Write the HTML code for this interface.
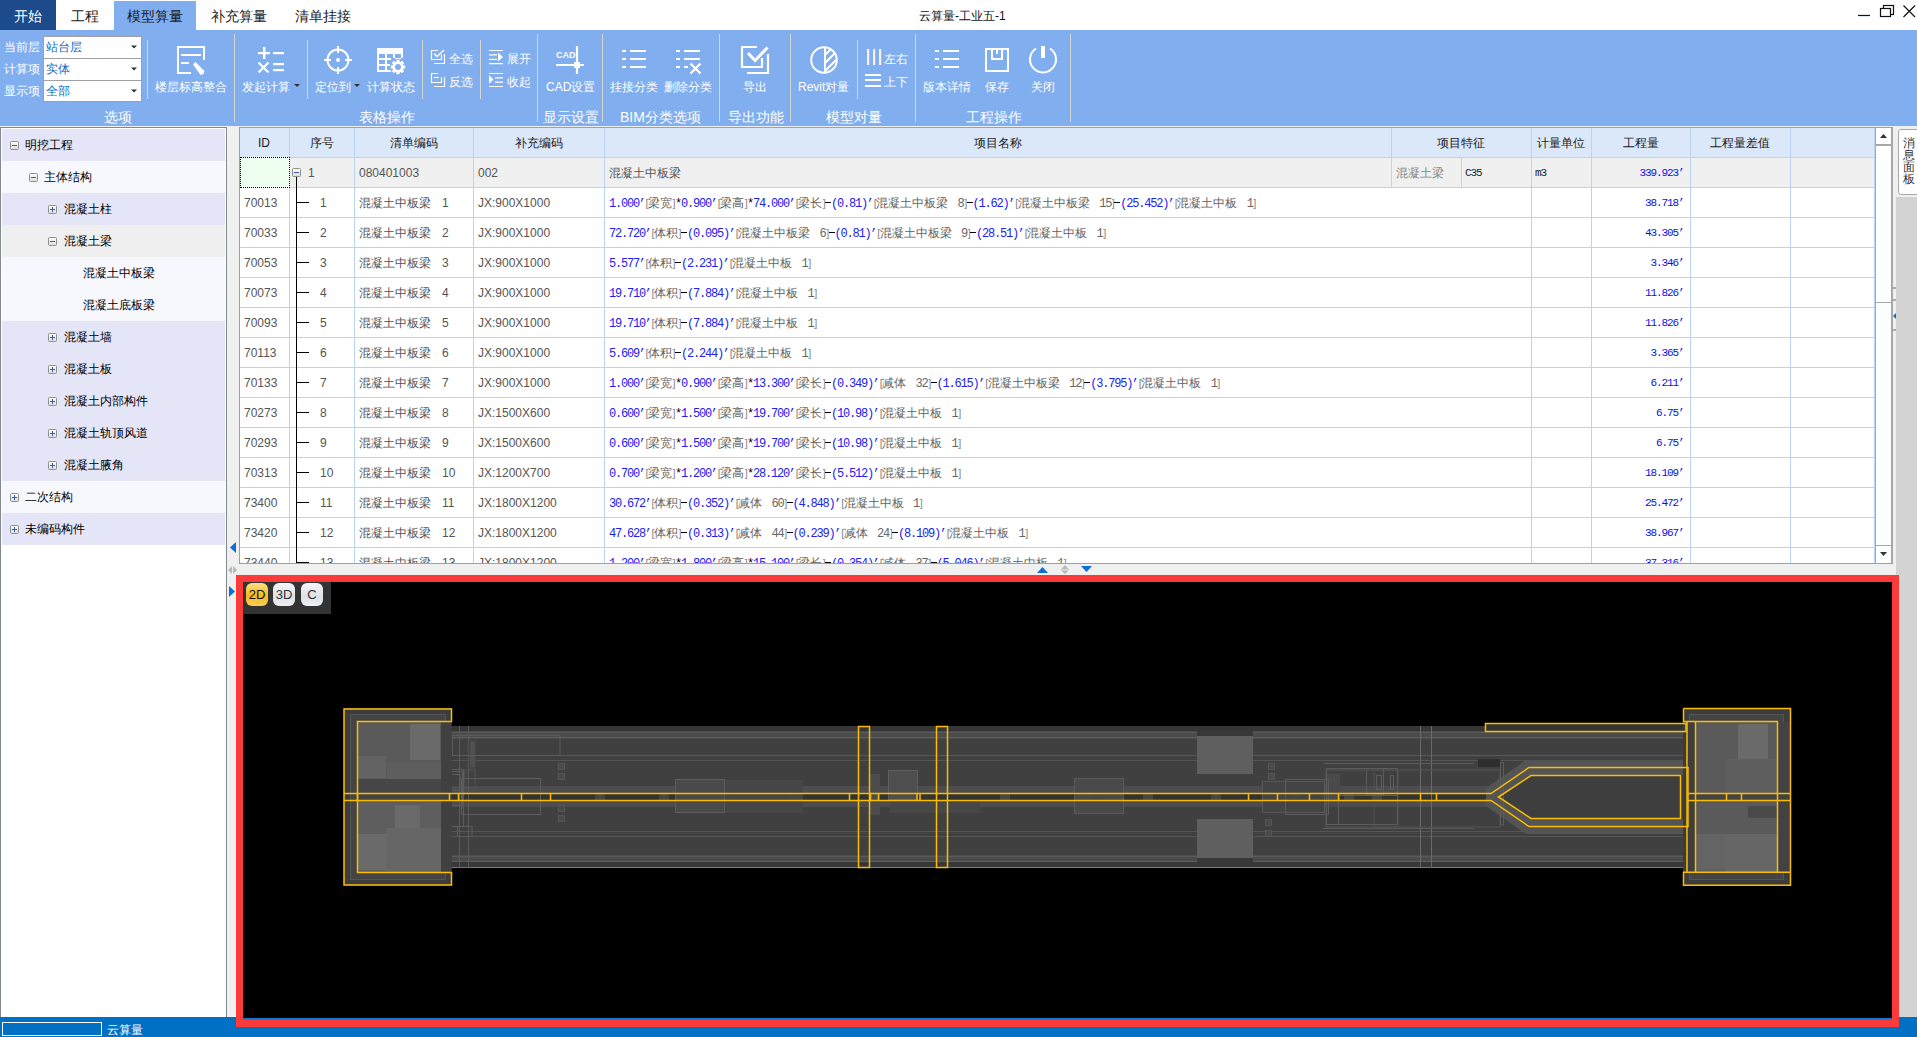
<!DOCTYPE html>
<html><head><meta charset="utf-8">
<style>
*{box-sizing:border-box;margin:0;padding:0}
html,body{width:1917px;height:1037px;overflow:hidden;background:#f0f0f0;font-family:"Liberation Sans",sans-serif;}
.a{position:absolute}
#title{left:0;top:0;width:1917px;height:30px;background:#fff}
.tab{position:absolute;top:1px;height:30px;font-size:14px;line-height:30px;color:#1a1a1a;white-space:nowrap}
#ribbon{left:0;top:30px;width:1917px;height:96px;background:#81aeee}
.rt{position:absolute;color:#fff;font-size:12px;line-height:12px;white-space:nowrap}
.gl{position:absolute;color:#fff;font-size:14px;line-height:14px;white-space:nowrap;top:81px}
.sep{position:absolute;width:1px;background:#d4dce8}
#left{left:0;top:127px;width:227px;height:890px;background:#fff;border:1px solid #828790;border-bottom:none}
.tt{position:absolute;font-size:12px;line-height:12px;color:#000;white-space:nowrap}
.tr{position:absolute;height:32px}
.trx{position:absolute;left:1px;width:224px;height:32px;font-size:13px;line-height:32px;color:#111;white-space:nowrap}
.pm{position:absolute;width:9px;height:9px;border:1px solid #8f8f8f;border-radius:1.5px;background:linear-gradient(#fbfbfb,#dedede)}
#grid{left:239px;top:127px;width:1653px;height:437px;background:#fff;border:1px solid #a0a0a0;overflow:hidden}
#canvasbox{left:236px;top:575px;width:1663px;height:452px;border:7px solid #fc3a3a;background:#000}
#status{left:0;top:1017px;width:1917px;height:20px;background:#0070c4}
.gh{position:absolute;text-align:center;font-size:12px;line-height:12px;color:#1a1a1a;font-weight:500;white-space:nowrap}
.gd{position:absolute;font-size:12px;line-height:12px;color:#555;white-space:nowrap}
.gm{position:absolute;font-family:"Liberation Mono",monospace;font-size:11px;line-height:11px;color:#222;letter-spacing:-1.1px;white-space:nowrap}
.gv{position:absolute;font-family:"Liberation Mono",monospace;font-size:11px;line-height:12px;color:#0c0cf0;letter-spacing:-1.1px;white-space:nowrap}
.gf{position:absolute;white-space:pre;font-size:12px;line-height:12px;font-family:"Liberation Sans",sans-serif}
.fn{font-family:"Liberation Mono",monospace;color:#2020f4;letter-spacing:-1.2px}
.fo{font-family:"Liberation Mono",monospace;color:#000;letter-spacing:-1.2px}
.fb{font-family:"Liberation Mono",monospace;color:#666;letter-spacing:-1.2px}
.fc{color:#646464}
.fs{display:inline-block}
.fd{display:inline-block;width:6px;height:1px;background:#000;vertical-align:4.5px}
.fk{display:inline-block;width:3px;color:#888;font-size:11px;text-indent:0.6px}
.fq{display:inline-block;width:6px;font-family:"Liberation Mono",monospace;color:#2020f4;font-size:12px;text-indent:-0.6px;overflow:visible}
.fq2{display:inline-block;width:5px;letter-spacing:0}
.btn{position:absolute;top:583px;width:22px;height:23px;border-radius:6px;background:linear-gradient(#f4f6f9,#dde1e6 60%,#eceff3);color:#333;font-size:13px;line-height:23px;text-align:center;font-family:"Liberation Sans",sans-serif}
</style></head><body>
<div id="title" class="a"></div>
<div class="a" style="left:0;top:0;width:56px;height:30px;background:#1c4a8b"></div>
<div class="tab" style="left:14px;color:#fff">开始</div>
<div class="tab" style="left:71px">工程</div>
<div class="a" style="left:114px;top:1px;width:82px;height:29px;background:#81aeee"></div>
<div class="tab" style="left:127px">模型算量</div>
<div class="tab" style="left:211px">补充算量</div>
<div class="tab" style="left:295px">清单挂接</div>
<div class="a" style="left:919px;top:1px;height:30px;line-height:30px;font-size:12px;color:#111;white-space:nowrap">云算量-工业五-1</div>
<svg class="a" style="left:1850px;top:0" width="67" height="30"><path d="M8,15.5h12" stroke="#111" stroke-width="1.2"/><rect x="33.5" y="5.5" width="10" height="9" fill="none" stroke="#111" stroke-width="1.2"/><rect x="30.5" y="8.5" width="10" height="8" fill="#fff" stroke="#111" stroke-width="1.2"/><path d="M53.5,5.5l11.5,11.5M65,5.5l-11.5,11.5" stroke="#111" stroke-width="1.2"/></svg>


<div id="ribbon" class="a"></div>
<!-- ribbon labels -->
<div class="rt" style="left:4px;top:41px">当前层</div>
<div class="rt" style="left:4px;top:63px">计算项</div>
<div class="rt" style="left:4px;top:85px">显示项</div>
<div class="a" style="left:43px;top:36px;width:99px;height:23px;background:#fff;border:1px solid #a0a0a0"></div>
<div class="a" style="left:43px;top:58px;width:99px;height:23px;background:#fff;border:1px solid #a0a0a0"></div>
<div class="a" style="left:43px;top:80px;width:99px;height:22px;background:#fff;border:1px solid #a0a0a0"></div>
<div class="rt" style="left:46px;top:41px;color:#0b6bc8">站台层</div>
<div class="rt" style="left:46px;top:63px;color:#0b6bc8">实体</div>
<div class="rt" style="left:46px;top:85px;color:#0b6bc8">全部</div>
<div class="rt" style="left:155px;top:81px">楼层标高整合</div>
<div class="rt" style="left:242px;top:81px">发起计算</div>
<div class="rt" style="left:315px;top:81px">定位到</div>
<div class="rt" style="left:367px;top:81px">计算状态</div>
<div class="rt" style="left:449px;top:53px">全选</div>
<div class="rt" style="left:449px;top:76px">反选</div>
<div class="rt" style="left:507px;top:53px">展开</div>
<div class="rt" style="left:507px;top:76px">收起</div>
<div class="rt" style="left:546px;top:81px">CAD设置</div>
<div class="rt" style="left:610px;top:81px">挂接分类</div>
<div class="rt" style="left:664px;top:81px">删除分类</div>
<div class="rt" style="left:743px;top:81px">导出</div>
<div class="rt" style="left:798px;top:81px">Revit对量</div>
<div class="rt" style="left:884px;top:53px">左右</div>
<div class="rt" style="left:884px;top:76px">上下</div>
<div class="rt" style="left:923px;top:81px">版本详情</div>
<div class="rt" style="left:985px;top:81px">保存</div>
<div class="rt" style="left:1031px;top:81px">关闭</div>
<div class="gl" style="left:104px;top:110px">选项</div>
<div class="gl" style="left:359px;top:110px">表格操作</div>
<div class="gl" style="left:543px;top:110px">显示设置</div>
<div class="gl" style="left:620px;top:110px">BIM分类选项</div>
<div class="gl" style="left:728px;top:110px">导出功能</div>
<div class="gl" style="left:826px;top:110px">模型对量</div>
<div class="gl" style="left:966px;top:110px">工程操作</div>
<svg class="a" style="left:0;top:0" width="1100" height="126" viewBox="0 0 1100 126">
 <g fill="#d6d6d0">
  <rect x="147" y="40" width="1" height="59"/>
  <rect x="234" y="34" width="1" height="88"/>
  <rect x="307" y="40" width="1" height="59"/>
  <rect x="422" y="40" width="1" height="59"/>
  <rect x="480" y="40" width="1" height="59"/>
  <rect x="537" y="34" width="1" height="88"/>
  <rect x="602" y="34" width="1" height="88"/>
  <rect x="719" y="34" width="1" height="88"/>
  <rect x="790" y="34" width="1" height="88"/>
  <rect x="857" y="40" width="1" height="59"/>
  <rect x="915" y="34" width="1" height="88"/>
  <rect x="1070" y="34" width="1" height="88"/>
 </g>
 <!-- combo arrows -->
 <g fill="#333">
  <path d="M131,45.5h6l-3,3z"/><path d="M131,67.5h6l-3,3z"/><path d="M131,89.5h6l-3,3z"/>
  <path d="M294,84h6l-3,3z"/><path d="M354,84h6l-3,3z"/>
 </g>
 <g fill="#fff">
  <!-- 楼层标高整合 -->
  <path d="M177,46h28v14h-2v-12h-24v24h12v2h-14z"/>
  <rect x="181" y="54" width="20" height="2"/><rect x="181" y="62" width="8" height="2"/>
  <path d="M193,64.5l2.5,-2.5l9,9l-1,3l-3,1z"/>
  <!-- 发起计算 -->
  <rect x="258" y="52" width="12" height="2.2"/><rect x="263" y="47" width="2.4" height="12"/>
  <rect x="273" y="52" width="11" height="2.2"/>
  <rect x="273" y="63" width="11" height="2.2"/><rect x="273" y="69" width="11" height="2.2"/>
  <!-- 计算状态 -->
  <rect x="377" y="48" width="26" height="24"/>
  <g fill="#81aeee"><rect x="379" y="54" width="6" height="4"/><rect x="379" y="60" width="6" height="4"/><rect x="379" y="66" width="6" height="4"/>
  <rect x="387" y="54" width="6" height="4"/><rect x="387" y="60" width="6" height="4"/><rect x="387" y="66" width="6" height="4"/><rect x="395" y="54" width="6" height="4"/>
  <rect x="391" y="58" width="4" height="2"/><rect x="391" y="64" width="2" height="2"/><rect x="401" y="58" width="2" height="2"/>
  <circle cx="398" cy="67" r="8.3"/></g>
  <circle cx="398" cy="67" r="5.6"/>
  <g transform="translate(398 67)"><rect x="-1.6" y="-7.2" width="3.2" height="14.4"/><rect x="-1.6" y="-7.2" width="3.2" height="14.4" transform="rotate(45)"/><rect x="-1.6" y="-7.2" width="3.2" height="14.4" transform="rotate(90)"/><rect x="-1.6" y="-7.2" width="3.2" height="14.4" transform="rotate(135)"/></g>
  <circle cx="398" cy="67" r="3" fill="#81aeee"/>
 </g>
 <g stroke="#fff" fill="none">
  <path d="M258.5,62.5l10,10M268.5,62.5l-10,10" stroke-width="2.2"/>
  <circle cx="338" cy="60" r="10.5" stroke-width="2"/><circle cx="338" cy="60" r="1.2" stroke-width="1.6"/>
  <path d="M324,60h7M345,60h7M338,46v7M338,67v7" stroke-width="2"/>
  <!-- 全选 -->
  <path d="M438,50.5h-6.5v9h10v-5" stroke-width="1.2"/>
  <path d="M434,63.5h10.5v-9.5" stroke-width="1.2"/>
  <path d="M434,53.5l3,3l7,-6.5" stroke-width="1.5"/>
  <!-- 反选 -->
  <path d="M438,73.5h-6.5v9h10v-5" stroke-width="1.2"/>
  <path d="M434,86.5h10.5v-9.5" stroke-width="1.2"/>
  <path d="M434,77.5h5" stroke-width="1.2"/>
  <!-- 展开 -->
  <path d="M489,50.5h14M489,54.8h8M489,59.3h8M489,63.7h14" stroke-width="1.2"/>
  <!-- 收起 -->
  <path d="M489,73.5h14M495,77.8h8M495,82.2h8M489,86.5h14" stroke-width="1.2"/>
  <!-- CAD -->
  <path d="M577,46v28M556,65h28" stroke-width="2.2"/>
  <!-- 挂接分类 / 版本详情 / 删除 -->
  <path d="M622,51h4M630,51h16M622,59h4M630,59h16M622,67h4M630,67h16" stroke-width="2.2"/>
  <path d="M676,51h4M684,51h16M676,59h4M684,59h16M676,67h4M684,67h4" stroke-width="2.2"/>
  <path d="M690.5,63.5l10,10M700.5,63.5l-10,10" stroke-width="2.2"/>
  <path d="M935,51h4M943,51h16M935,59h4M943,59h16M935,67h4M943,67h16" stroke-width="2.2"/>
  <!-- 导出 -->
  <path d="M757,47h-15v20h20v-9" stroke-width="2.2"/>
  <path d="M747,73h21v-19" stroke-width="2.2"/>
  <path d="M748,53l7,7.5l12.5,-13" stroke-width="3"/>
  <!-- Revit -->
  <circle cx="824" cy="60" r="12.8" stroke-width="2"/>
  <path d="M825,47v26M825,55l6,-6M825,63l10.5,-10.5M825,71l11.5,-11.5" stroke-width="2"/>
  <!-- 上下 -->
  <path d="M865,75h16M865,80h16M865,86h16" stroke-width="2.2"/>
  <!-- 保存 -->
  <rect x="986" y="49" width="22" height="22" stroke-width="2"/>
  <path d="M992,49v10h10v-10M997,49v5" stroke-width="2"/>
  <!-- power -->
  <path d="M1036,48.5a13,13 0 1 0 14,0" stroke-width="2"/>
 </g>
 <g fill="#fdf0e8"><rect x="867" y="49" width="2.2" height="16"/><rect x="873" y="49" width="2.2" height="16"/><rect x="879" y="49" width="2.2" height="16"/></g>
 <g fill="#fff">
  <path d="M498,52.5l5,4.5l-5,4.6z"/>
  <path d="M489,75.2l4.5,4.4l-4.5,4.4z"/>
  <rect x="574" y="62" width="6" height="6"/>
  <rect x="1041" y="46" width="4" height="12"/>
 </g>
 <text x="556" y="58" font-family="Liberation Sans" font-weight="bold" font-size="9" fill="#fff">CAD</text>
</svg>


<div id="left" class="a"></div>
<div class="tr" style="top:129px;left:2px;width:223px;background:#e5e5f8"></div>
<div class="pm" style="left:10px;top:141px"></div>
<div class="a" style="left:12px;top:145px;width:5px;height:1px;background:#3a5fb0"></div>
<div class="tt" style="left:25px;top:139px">明挖工程</div>
<div class="tr" style="top:161px;left:2px;width:223px;background:#f7f8fe"></div>
<div class="pm" style="left:29px;top:173px"></div>
<div class="a" style="left:31px;top:177px;width:5px;height:1px;background:#3a5fb0"></div>
<div class="tt" style="left:44px;top:171px">主体结构</div>
<div class="tr" style="top:193px;left:2px;width:223px;background:#e5e5f8"></div>
<div class="pm" style="left:48px;top:205px"></div>
<div class="a" style="left:50px;top:209px;width:5px;height:1px;background:#3a5fb0"></div>
<div class="a" style="left:52px;top:207px;width:1px;height:5px;background:#3a5fb0"></div>
<div class="tt" style="left:64px;top:203px">混凝土柱</div>
<div class="tr" style="top:225px;left:2px;width:223px;background:#efefef"></div>
<div class="pm" style="left:48px;top:237px"></div>
<div class="a" style="left:50px;top:241px;width:5px;height:1px;background:#3a5fb0"></div>
<div class="tt" style="left:64px;top:235px">混凝土梁</div>
<div class="tr" style="top:257px;left:2px;width:223px;background:#f7f8fe"></div>
<div class="tt" style="left:83px;top:267px">混凝土中板梁</div>
<div class="tr" style="top:289px;left:2px;width:223px;background:#f7f8fe"></div>
<div class="tt" style="left:83px;top:299px">混凝土底板梁</div>
<div class="tr" style="top:321px;left:2px;width:223px;background:#e5e5f8"></div>
<div class="pm" style="left:48px;top:333px"></div>
<div class="a" style="left:50px;top:337px;width:5px;height:1px;background:#3a5fb0"></div>
<div class="a" style="left:52px;top:335px;width:1px;height:5px;background:#3a5fb0"></div>
<div class="tt" style="left:64px;top:331px">混凝土墙</div>
<div class="tr" style="top:353px;left:2px;width:223px;background:#e5e5f8"></div>
<div class="pm" style="left:48px;top:365px"></div>
<div class="a" style="left:50px;top:369px;width:5px;height:1px;background:#3a5fb0"></div>
<div class="a" style="left:52px;top:367px;width:1px;height:5px;background:#3a5fb0"></div>
<div class="tt" style="left:64px;top:363px">混凝土板</div>
<div class="tr" style="top:385px;left:2px;width:223px;background:#e5e5f8"></div>
<div class="pm" style="left:48px;top:397px"></div>
<div class="a" style="left:50px;top:401px;width:5px;height:1px;background:#3a5fb0"></div>
<div class="a" style="left:52px;top:399px;width:1px;height:5px;background:#3a5fb0"></div>
<div class="tt" style="left:64px;top:395px">混凝土内部构件</div>
<div class="tr" style="top:417px;left:2px;width:223px;background:#e5e5f8"></div>
<div class="pm" style="left:48px;top:429px"></div>
<div class="a" style="left:50px;top:433px;width:5px;height:1px;background:#3a5fb0"></div>
<div class="a" style="left:52px;top:431px;width:1px;height:5px;background:#3a5fb0"></div>
<div class="tt" style="left:64px;top:427px">混凝土轨顶风道</div>
<div class="tr" style="top:449px;left:2px;width:223px;background:#e5e5f8"></div>
<div class="pm" style="left:48px;top:461px"></div>
<div class="a" style="left:50px;top:465px;width:5px;height:1px;background:#3a5fb0"></div>
<div class="a" style="left:52px;top:463px;width:1px;height:5px;background:#3a5fb0"></div>
<div class="tt" style="left:64px;top:459px">混凝土腋角</div>
<div class="tr" style="top:481px;left:2px;width:223px;background:#f7f8fe"></div>
<div class="pm" style="left:10px;top:493px"></div>
<div class="a" style="left:12px;top:497px;width:5px;height:1px;background:#3a5fb0"></div>
<div class="a" style="left:14px;top:495px;width:1px;height:5px;background:#3a5fb0"></div>
<div class="tt" style="left:25px;top:491px">二次结构</div>
<div class="tr" style="top:513px;left:2px;width:223px;background:#e5e5f8"></div>
<div class="pm" style="left:10px;top:525px"></div>
<div class="a" style="left:12px;top:529px;width:5px;height:1px;background:#3a5fb0"></div>
<div class="a" style="left:14px;top:527px;width:1px;height:5px;background:#3a5fb0"></div>
<div class="tt" style="left:25px;top:523px">未编码构件</div>
<div class="a" style="left:239px;top:127px;width:1654px;height:437px;background:#fff;border:1px solid #a0a0a0"></div>
<div class="a" style="left:240px;top:128px;width:1634px;height:29px;background:#dae8fa"></div>
<div class="a" style="left:240px;top:158px;width:1634px;height:29px;background:#f0f0f0"></div>
<div class="a" style="left:240px;top:157px;width:1635px;height:1px;background:#bad2f4"></div>
<div class="a" style="left:240px;top:187px;width:1635px;height:1px;background:#bad2f4"></div>
<div class="a" style="left:240px;top:217px;width:1635px;height:1px;background:#bad2f4"></div>
<div class="a" style="left:240px;top:247px;width:1635px;height:1px;background:#bad2f4"></div>
<div class="a" style="left:240px;top:277px;width:1635px;height:1px;background:#bad2f4"></div>
<div class="a" style="left:240px;top:307px;width:1635px;height:1px;background:#bad2f4"></div>
<div class="a" style="left:240px;top:337px;width:1635px;height:1px;background:#bad2f4"></div>
<div class="a" style="left:240px;top:367px;width:1635px;height:1px;background:#bad2f4"></div>
<div class="a" style="left:240px;top:397px;width:1635px;height:1px;background:#bad2f4"></div>
<div class="a" style="left:240px;top:427px;width:1635px;height:1px;background:#bad2f4"></div>
<div class="a" style="left:240px;top:457px;width:1635px;height:1px;background:#bad2f4"></div>
<div class="a" style="left:240px;top:487px;width:1635px;height:1px;background:#bad2f4"></div>
<div class="a" style="left:240px;top:517px;width:1635px;height:1px;background:#bad2f4"></div>
<div class="a" style="left:240px;top:547px;width:1635px;height:1px;background:#bad2f4"></div>
<div class="a" style="left:289px;top:128px;width:1px;height:435px;background:#bad2f4"></div>
<div class="a" style="left:354px;top:128px;width:1px;height:435px;background:#bad2f4"></div>
<div class="a" style="left:473px;top:128px;width:1px;height:435px;background:#bad2f4"></div>
<div class="a" style="left:604px;top:128px;width:1px;height:435px;background:#bad2f4"></div>
<div class="a" style="left:1531px;top:128px;width:1px;height:435px;background:#bad2f4"></div>
<div class="a" style="left:1591px;top:128px;width:1px;height:435px;background:#bad2f4"></div>
<div class="a" style="left:1690px;top:128px;width:1px;height:435px;background:#bad2f4"></div>
<div class="a" style="left:1790px;top:128px;width:1px;height:435px;background:#bad2f4"></div>
<div class="a" style="left:1874px;top:128px;width:1px;height:435px;background:#bad2f4"></div>
<div class="a" style="left:1391px;top:128px;width:1px;height:59px;background:#bad2f4"></div>
<div class="a" style="left:1461px;top:158px;width:1px;height:29px;background:#bad2f4"></div>
<div class="gh" style="left:239px;width:50px;top:137px">ID</div>
<div class="gh" style="left:289px;width:65px;top:137px">序号</div>
<div class="gh" style="left:354px;width:119px;top:137px">清单编码</div>
<div class="gh" style="left:473px;width:131px;top:137px">补充编码</div>
<div class="gh" style="left:604px;width:787px;top:137px">项目名称</div>
<div class="gh" style="left:1391px;width:140px;top:137px">项目特征</div>
<div class="gh" style="left:1531px;width:60px;top:137px">计量单位</div>
<div class="gh" style="left:1591px;width:99px;top:137px">工程量</div>
<div class="gh" style="left:1690px;width:100px;top:137px">工程量差值</div>
<div class="a" style="left:240px;top:157px;width:50px;height:31px;background:#efffef;border:1px dotted #000"></div>
<div class="pm" style="left:292px;top:168px"></div><div class="a" style="left:294px;top:172px;width:5px;height:1px;background:#3a5fb0"></div>
<div class="gd" style="left:308px;top:167px">1</div>
<div class="gd" style="left:359px;top:167px">080401003</div>
<div class="gd" style="left:478px;top:167px">002</div>
<div class="gd" style="left:609px;top:167px">混凝土中板梁</div>
<div class="gd" style="left:1396px;top:167px;color:#888">混凝土梁</div>
<div class="gm" style="left:1465px;top:168px">C35</div>
<div class="gm" style="left:1535px;top:168px">m3</div>
<div class="gv" style="right:234px;top:167px">339.923<span class="fq2">’</span></div>
<div class="a" style="left:296px;top:177px;width:1px;height:386px;background:#000"></div>
<div class="a" style="left:296px;top:202px;width:13px;height:1px;background:#000"></div>
<div class="gd" style="left:244px;top:197px">70013</div>
<div class="gd" style="left:320px;top:197px">1</div>
<div class="gd" style="left:359px;top:197px">混凝土中板梁</div>
<div class="gd" style="left:442px;top:197px">1</div>
<div class="gd" style="left:478px;top:197px">JX:900X1000</div>
<div class="gf" id="f0" style="left:609px;top:197px"><span class="fn">1.000</span><span class="fq">’</span><span class="fk">[</span><span class="fc">梁宽</span><span class="fk">]</span><span class="fo">*</span><span class="fn">0.900</span><span class="fq">’</span><span class="fk">[</span><span class="fc">梁高</span><span class="fk">]</span><span class="fo">*</span><span class="fn">74.000</span><span class="fq">’</span><span class="fk">[</span><span class="fc">梁长</span><span class="fk">]</span><span class="fd"></span><span class="fn">(0.81)</span><span class="fq">’</span><span class="fk">[</span><span class="fc">混凝土中板梁</span><span class="fs" style="width:9.50px"></span><span class="fb">8</span><span class="fk">]</span><span class="fd"></span><span class="fn">(1.62)</span><span class="fq">’</span><span class="fk">[</span><span class="fc">混凝土中板梁</span><span class="fs" style="width:9.50px"></span><span class="fb">15</span><span class="fk">]</span><span class="fd"></span><span class="fn">(25.452)</span><span class="fq">’</span><span class="fk">[</span><span class="fc">混凝土中板</span><span class="fs" style="width:9.50px"></span><span class="fb">1</span><span class="fk">]</span></div>
<div class="gv" style="right:234px;top:197px">38.718<span class="fq2">’</span></div>
<div class="a" style="left:296px;top:232px;width:13px;height:1px;background:#000"></div>
<div class="gd" style="left:244px;top:227px">70033</div>
<div class="gd" style="left:320px;top:227px">2</div>
<div class="gd" style="left:359px;top:227px">混凝土中板梁</div>
<div class="gd" style="left:442px;top:227px">2</div>
<div class="gd" style="left:478px;top:227px">JX:900X1000</div>
<div class="gf" id="f1" style="left:609px;top:227px"><span class="fn">72.720</span><span class="fq">’</span><span class="fk">[</span><span class="fc">体积</span><span class="fk">]</span><span class="fd"></span><span class="fn">(0.095)</span><span class="fq">’</span><span class="fk">[</span><span class="fc">混凝土中板梁</span><span class="fs" style="width:9.50px"></span><span class="fb">6</span><span class="fk">]</span><span class="fd"></span><span class="fn">(0.81)</span><span class="fq">’</span><span class="fk">[</span><span class="fc">混凝土中板梁</span><span class="fs" style="width:9.50px"></span><span class="fb">9</span><span class="fk">]</span><span class="fd"></span><span class="fn">(28.51)</span><span class="fq">’</span><span class="fk">[</span><span class="fc">混凝土中板</span><span class="fs" style="width:9.50px"></span><span class="fb">1</span><span class="fk">]</span></div>
<div class="gv" style="right:234px;top:227px">43.305<span class="fq2">’</span></div>
<div class="a" style="left:296px;top:262px;width:13px;height:1px;background:#000"></div>
<div class="gd" style="left:244px;top:257px">70053</div>
<div class="gd" style="left:320px;top:257px">3</div>
<div class="gd" style="left:359px;top:257px">混凝土中板梁</div>
<div class="gd" style="left:442px;top:257px">3</div>
<div class="gd" style="left:478px;top:257px">JX:900X1000</div>
<div class="gf" id="f2" style="left:609px;top:257px"><span class="fn">5.577</span><span class="fq">’</span><span class="fk">[</span><span class="fc">体积</span><span class="fk">]</span><span class="fd"></span><span class="fn">(2.231)</span><span class="fq">’</span><span class="fk">[</span><span class="fc">混凝土中板</span><span class="fs" style="width:9.50px"></span><span class="fb">1</span><span class="fk">]</span></div>
<div class="gv" style="right:234px;top:257px">3.346<span class="fq2">’</span></div>
<div class="a" style="left:296px;top:292px;width:13px;height:1px;background:#000"></div>
<div class="gd" style="left:244px;top:287px">70073</div>
<div class="gd" style="left:320px;top:287px">4</div>
<div class="gd" style="left:359px;top:287px">混凝土中板梁</div>
<div class="gd" style="left:442px;top:287px">4</div>
<div class="gd" style="left:478px;top:287px">JX:900X1000</div>
<div class="gf" id="f3" style="left:609px;top:287px"><span class="fn">19.710</span><span class="fq">’</span><span class="fk">[</span><span class="fc">体积</span><span class="fk">]</span><span class="fd"></span><span class="fn">(7.884)</span><span class="fq">’</span><span class="fk">[</span><span class="fc">混凝土中板</span><span class="fs" style="width:9.50px"></span><span class="fb">1</span><span class="fk">]</span></div>
<div class="gv" style="right:234px;top:287px">11.826<span class="fq2">’</span></div>
<div class="a" style="left:296px;top:322px;width:13px;height:1px;background:#000"></div>
<div class="gd" style="left:244px;top:317px">70093</div>
<div class="gd" style="left:320px;top:317px">5</div>
<div class="gd" style="left:359px;top:317px">混凝土中板梁</div>
<div class="gd" style="left:442px;top:317px">5</div>
<div class="gd" style="left:478px;top:317px">JX:900X1000</div>
<div class="gf" id="f4" style="left:609px;top:317px"><span class="fn">19.710</span><span class="fq">’</span><span class="fk">[</span><span class="fc">体积</span><span class="fk">]</span><span class="fd"></span><span class="fn">(7.884)</span><span class="fq">’</span><span class="fk">[</span><span class="fc">混凝土中板</span><span class="fs" style="width:9.50px"></span><span class="fb">1</span><span class="fk">]</span></div>
<div class="gv" style="right:234px;top:317px">11.826<span class="fq2">’</span></div>
<div class="a" style="left:296px;top:352px;width:13px;height:1px;background:#000"></div>
<div class="gd" style="left:244px;top:347px">70113</div>
<div class="gd" style="left:320px;top:347px">6</div>
<div class="gd" style="left:359px;top:347px">混凝土中板梁</div>
<div class="gd" style="left:442px;top:347px">6</div>
<div class="gd" style="left:478px;top:347px">JX:900X1000</div>
<div class="gf" id="f5" style="left:609px;top:347px"><span class="fn">5.609</span><span class="fq">’</span><span class="fk">[</span><span class="fc">体积</span><span class="fk">]</span><span class="fd"></span><span class="fn">(2.244)</span><span class="fq">’</span><span class="fk">[</span><span class="fc">混凝土中板</span><span class="fs" style="width:9.50px"></span><span class="fb">1</span><span class="fk">]</span></div>
<div class="gv" style="right:234px;top:347px">3.365<span class="fq2">’</span></div>
<div class="a" style="left:296px;top:382px;width:13px;height:1px;background:#000"></div>
<div class="gd" style="left:244px;top:377px">70133</div>
<div class="gd" style="left:320px;top:377px">7</div>
<div class="gd" style="left:359px;top:377px">混凝土中板梁</div>
<div class="gd" style="left:442px;top:377px">7</div>
<div class="gd" style="left:478px;top:377px">JX:900X1000</div>
<div class="gf" id="f6" style="left:609px;top:377px"><span class="fn">1.000</span><span class="fq">’</span><span class="fk">[</span><span class="fc">梁宽</span><span class="fk">]</span><span class="fo">*</span><span class="fn">0.900</span><span class="fq">’</span><span class="fk">[</span><span class="fc">梁高</span><span class="fk">]</span><span class="fo">*</span><span class="fn">13.300</span><span class="fq">’</span><span class="fk">[</span><span class="fc">梁长</span><span class="fk">]</span><span class="fd"></span><span class="fn">(0.349)</span><span class="fq">’</span><span class="fk">[</span><span class="fc">减体</span><span class="fs" style="width:9.50px"></span><span class="fb">32</span><span class="fk">]</span><span class="fd"></span><span class="fn">(1.615)</span><span class="fq">’</span><span class="fk">[</span><span class="fc">混凝土中板梁</span><span class="fs" style="width:9.50px"></span><span class="fb">12</span><span class="fk">]</span><span class="fd"></span><span class="fn">(3.795)</span><span class="fq">’</span><span class="fk">[</span><span class="fc">混凝土中板</span><span class="fs" style="width:9.50px"></span><span class="fb">1</span><span class="fk">]</span></div>
<div class="gv" style="right:234px;top:377px">6.211<span class="fq2">’</span></div>
<div class="a" style="left:296px;top:412px;width:13px;height:1px;background:#000"></div>
<div class="gd" style="left:244px;top:407px">70273</div>
<div class="gd" style="left:320px;top:407px">8</div>
<div class="gd" style="left:359px;top:407px">混凝土中板梁</div>
<div class="gd" style="left:442px;top:407px">8</div>
<div class="gd" style="left:478px;top:407px">JX:1500X600</div>
<div class="gf" id="f7" style="left:609px;top:407px"><span class="fn">0.600</span><span class="fq">’</span><span class="fk">[</span><span class="fc">梁宽</span><span class="fk">]</span><span class="fo">*</span><span class="fn">1.500</span><span class="fq">’</span><span class="fk">[</span><span class="fc">梁高</span><span class="fk">]</span><span class="fo">*</span><span class="fn">19.700</span><span class="fq">’</span><span class="fk">[</span><span class="fc">梁长</span><span class="fk">]</span><span class="fd"></span><span class="fn">(10.98)</span><span class="fq">’</span><span class="fk">[</span><span class="fc">混凝土中板</span><span class="fs" style="width:9.50px"></span><span class="fb">1</span><span class="fk">]</span></div>
<div class="gv" style="right:234px;top:407px">6.75<span class="fq2">’</span></div>
<div class="a" style="left:296px;top:442px;width:13px;height:1px;background:#000"></div>
<div class="gd" style="left:244px;top:437px">70293</div>
<div class="gd" style="left:320px;top:437px">9</div>
<div class="gd" style="left:359px;top:437px">混凝土中板梁</div>
<div class="gd" style="left:442px;top:437px">9</div>
<div class="gd" style="left:478px;top:437px">JX:1500X600</div>
<div class="gf" id="f8" style="left:609px;top:437px"><span class="fn">0.600</span><span class="fq">’</span><span class="fk">[</span><span class="fc">梁宽</span><span class="fk">]</span><span class="fo">*</span><span class="fn">1.500</span><span class="fq">’</span><span class="fk">[</span><span class="fc">梁高</span><span class="fk">]</span><span class="fo">*</span><span class="fn">19.700</span><span class="fq">’</span><span class="fk">[</span><span class="fc">梁长</span><span class="fk">]</span><span class="fd"></span><span class="fn">(10.98)</span><span class="fq">’</span><span class="fk">[</span><span class="fc">混凝土中板</span><span class="fs" style="width:9.50px"></span><span class="fb">1</span><span class="fk">]</span></div>
<div class="gv" style="right:234px;top:437px">6.75<span class="fq2">’</span></div>
<div class="a" style="left:296px;top:472px;width:13px;height:1px;background:#000"></div>
<div class="gd" style="left:244px;top:467px">70313</div>
<div class="gd" style="left:320px;top:467px">10</div>
<div class="gd" style="left:359px;top:467px">混凝土中板梁</div>
<div class="gd" style="left:442px;top:467px">10</div>
<div class="gd" style="left:478px;top:467px">JX:1200X700</div>
<div class="gf" id="f9" style="left:609px;top:467px"><span class="fn">0.700</span><span class="fq">’</span><span class="fk">[</span><span class="fc">梁宽</span><span class="fk">]</span><span class="fo">*</span><span class="fn">1.200</span><span class="fq">’</span><span class="fk">[</span><span class="fc">梁高</span><span class="fk">]</span><span class="fo">*</span><span class="fn">28.120</span><span class="fq">’</span><span class="fk">[</span><span class="fc">梁长</span><span class="fk">]</span><span class="fd"></span><span class="fn">(5.512)</span><span class="fq">’</span><span class="fk">[</span><span class="fc">混凝土中板</span><span class="fs" style="width:9.50px"></span><span class="fb">1</span><span class="fk">]</span></div>
<div class="gv" style="right:234px;top:467px">18.109<span class="fq2">’</span></div>
<div class="a" style="left:296px;top:502px;width:13px;height:1px;background:#000"></div>
<div class="gd" style="left:244px;top:497px">73400</div>
<div class="gd" style="left:320px;top:497px">11</div>
<div class="gd" style="left:359px;top:497px">混凝土中板梁</div>
<div class="gd" style="left:442px;top:497px">11</div>
<div class="gd" style="left:478px;top:497px">JX:1800X1200</div>
<div class="gf" id="f10" style="left:609px;top:497px"><span class="fn">30.672</span><span class="fq">’</span><span class="fk">[</span><span class="fc">体积</span><span class="fk">]</span><span class="fd"></span><span class="fn">(0.352)</span><span class="fq">’</span><span class="fk">[</span><span class="fc">减体</span><span class="fs" style="width:9.50px"></span><span class="fb">60</span><span class="fk">]</span><span class="fd"></span><span class="fn">(4.848)</span><span class="fq">’</span><span class="fk">[</span><span class="fc">混凝土中板</span><span class="fs" style="width:9.50px"></span><span class="fb">1</span><span class="fk">]</span></div>
<div class="gv" style="right:234px;top:497px">25.472<span class="fq2">’</span></div>
<div class="a" style="left:296px;top:532px;width:13px;height:1px;background:#000"></div>
<div class="gd" style="left:244px;top:527px">73420</div>
<div class="gd" style="left:320px;top:527px">12</div>
<div class="gd" style="left:359px;top:527px">混凝土中板梁</div>
<div class="gd" style="left:442px;top:527px">12</div>
<div class="gd" style="left:478px;top:527px">JX:1800X1200</div>
<div class="gf" id="f11" style="left:609px;top:527px"><span class="fn">47.628</span><span class="fq">’</span><span class="fk">[</span><span class="fc">体积</span><span class="fk">]</span><span class="fd"></span><span class="fn">(0.313)</span><span class="fq">’</span><span class="fk">[</span><span class="fc">减体</span><span class="fs" style="width:9.50px"></span><span class="fb">44</span><span class="fk">]</span><span class="fd"></span><span class="fn">(0.239)</span><span class="fq">’</span><span class="fk">[</span><span class="fc">减体</span><span class="fs" style="width:9.50px"></span><span class="fb">24</span><span class="fk">]</span><span class="fd"></span><span class="fn">(8.109)</span><span class="fq">’</span><span class="fk">[</span><span class="fc">混凝土中板</span><span class="fs" style="width:9.50px"></span><span class="fb">1</span><span class="fk">]</span></div>
<div class="gv" style="right:234px;top:527px">38.967<span class="fq2">’</span></div>
<div class="a" style="left:296px;top:562px;width:13px;height:1px;background:#000"></div>
<div class="gd" style="left:244px;top:557px">73440</div>
<div class="gd" style="left:320px;top:557px">13</div>
<div class="gd" style="left:359px;top:557px">混凝土中板梁</div>
<div class="gd" style="left:442px;top:557px">13</div>
<div class="gd" style="left:478px;top:557px">JX:1800X1200</div>
<div class="gf" id="f12" style="left:609px;top:557px"><span class="fn">1.200</span><span class="fq">’</span><span class="fk">[</span><span class="fc">梁宽</span><span class="fk">]</span><span class="fo">*</span><span class="fn">1.800</span><span class="fq">’</span><span class="fk">[</span><span class="fc">梁高</span><span class="fk">]</span><span class="fo">*</span><span class="fn">15.100</span><span class="fq">’</span><span class="fk">[</span><span class="fc">梁长</span><span class="fk">]</span><span class="fd"></span><span class="fn">(0.354)</span><span class="fq">’</span><span class="fk">[</span><span class="fc">减体</span><span class="fs" style="width:9.50px"></span><span class="fb">37</span><span class="fk">]</span><span class="fd"></span><span class="fn">(5.046)</span><span class="fq">’</span><span class="fk">[</span><span class="fc">混凝土中板</span><span class="fs" style="width:9.50px"></span><span class="fb">1</span><span class="fk">]</span></div>
<div class="gv" style="right:234px;top:557px">37.316<span class="fq2">’</span></div>
<div class="a" style="left:1875px;top:128px;width:18px;height:435px;background:#fff;border-left:1px solid #a8a8a8;border-right:2px solid #a8a8a8"></div>
<div class="a" style="left:1875px;top:144px;width:18px;height:2px;background:#a8a8a8"></div>
<div class="a" style="left:1875px;top:302px;width:18px;height:1px;background:#a8a8a8"></div>
<div class="a" style="left:1875px;top:545px;width:18px;height:1px;background:#a8a8a8"></div>
<svg class="a" style="left:1875px;top:128px" width="18" height="435"><path d="M5,10h7l-3.5,-4z" fill="#333"/><path d="M5,424h7l-3.5,4z" fill="#333"/></svg>
<div class="a" style="left:1896px;top:197px;width:21px;height:820px;background:#d3d3d3"></div>
<div class="a" style="left:1898px;top:129px;width:24px;height:66px;background:#fff;border:1px solid #a8a8a8;border-radius:3px"></div>
<div class="a" style="left:1903px;top:137px;width:13px;font-size:12px;line-height:12px;color:#333;white-space:normal;word-break:break-all">消息面板</div>
<svg class="a" style="left:1892px;top:280px" width="5" height="60"><path d="M1,8h3M1,20h3M1,50h3" stroke="#666" stroke-width="1"/><path d="M4,33V39L1,36Z" fill="#0a6fd6"/></svg>
<div id="status" class="a"></div>
<div class="a" style="left:2px;top:1022px;width:100px;height:14px;border:1px solid #fff"></div>
<div class="a" style="left:107px;top:1024px;font-size:12px;line-height:12px;color:#fff;white-space:nowrap">云算量</div>
<div class="a" style="left:239px;top:563px;width:1654px;height:1px;background:#a0a0a0"></div>
<div class="a" style="left:227px;top:564px;width:1669px;height:11px;background:#f0f0f0"></div>
<div class="a" style="left:243px;top:582px;width:1649px;height:436px;background:#000"></div>
<svg class="a" style="left:0;top:0" width="1917" height="1037" viewBox="0 0 1917 1037"><rect x="449" y="726" width="1235.0" height="142.0" fill="#404040" /><rect x="449" y="726" width="1235.0" height="5.0" fill="#363636" /><rect x="449" y="731" width="1235.0" height="8.0" fill="#4b4b4b" /><path d="M449,732.5L1684,732.5" stroke="#5a5a5a" stroke-width="1" fill="none"/><path d="M449,737.5L1684,737.5" stroke="#5e5e5e" stroke-width="1" fill="none"/><path d="M449,755.5L1684,755.5" stroke="#595959" stroke-width="1" fill="none"/><path d="M449,760.5L1684,760.5" stroke="#555555" stroke-width="1" fill="none"/><rect x="449" y="786" width="1039.0" height="7.0" fill="#4d4d4d" /><rect x="449" y="801" width="1039.0" height="6.0" fill="#4d4d4d" /><rect x="344" y="793" width="1147.0" height="8.0" fill="#333333" /><path d="M449,831.5L1684,831.5" stroke="#555555" stroke-width="1" fill="none"/><path d="M449,836.5L1684,836.5" stroke="#555555" stroke-width="1" fill="none"/><rect x="449" y="855" width="1235.0" height="7.0" fill="#4b4b4b" /><path d="M449,856.5L1684,856.5" stroke="#5a5a5a" stroke-width="1" fill="none"/><path d="M449,861.5L1684,861.5" stroke="#5e5e5e" stroke-width="1" fill="none"/><rect x="449" y="862" width="1235.0" height="5.0" fill="#373737" /><path d="M449,867.5L1684,867.5" stroke="#7a7a7a" stroke-width="1" fill="none"/><path d="M468.5,726L468.5,868" stroke="#5a5a5a" stroke-width="1" fill="none"/><path d="M459.5,726L459.5,868" stroke="#5a5a5a" stroke-width="1" fill="none"/><rect x="465" y="770" width="10.0" height="18.0" fill="none" stroke="#555" stroke-width="1"/><rect x="468" y="741" width="7.0" height="27.0" fill="none" stroke="#4a4a4a" stroke-width="1"/><rect x="470" y="742" width="5.0" height="25.0" fill="#505050" /><rect x="675" y="779" width="50.0" height="34.0" fill="#4a4a4a" /><rect x="675.5" y="779.5" width="49.0" height="33.0" fill="none" stroke="#5c5c5c" stroke-width="1"/><rect x="725" y="780" width="78.0" height="33.0" fill="#464646" /><rect x="1197" y="736" width="56.0" height="38.0" fill="#5f5f5f" /><rect x="1197" y="819" width="56.0" height="39.0" fill="#5f5f5f" /><rect x="1197" y="731" width="56.0" height="5.0" fill="#383838" /><rect x="1197" y="858" width="56.0" height="9.0" fill="#383838" /><rect x="1074" y="778" width="50.0" height="36.0" fill="#4a4a4a" /><rect x="1074.5" y="778.5" width="49.0" height="35.0" fill="none" stroke="#5a5a5a" stroke-width="1"/><rect x="1262" y="781" width="63.0" height="32.0" fill="#444444" /><rect x="1262.5" y="781.5" width="62.0" height="31.0" fill="none" stroke="#585858" stroke-width="1"/><rect x="1326" y="774" width="14.0" height="33.0" fill="#4a4a4a" /><rect x="558" y="763" width="7.0" height="7.0" fill="#4a4a4a" /><rect x="558.5" y="763.5" width="6.0" height="6.0" fill="none" stroke="#555" stroke-width="1"/><rect x="558" y="773" width="7.0" height="7.0" fill="#4a4a4a" /><rect x="558.5" y="773.5" width="6.0" height="6.0" fill="none" stroke="#555" stroke-width="1"/><rect x="558" y="805" width="7.0" height="7.0" fill="#4a4a4a" /><rect x="558.5" y="805.5" width="6.0" height="6.0" fill="none" stroke="#555" stroke-width="1"/><rect x="558" y="815" width="7.0" height="7.0" fill="#4a4a4a" /><rect x="558.5" y="815.5" width="6.0" height="6.0" fill="none" stroke="#555" stroke-width="1"/><rect x="1268" y="763" width="7.0" height="7.0" fill="#4a4a4a" /><rect x="1268.5" y="763.5" width="6.0" height="6.0" fill="none" stroke="#555" stroke-width="1"/><rect x="1268" y="773" width="7.0" height="7.0" fill="#4a4a4a" /><rect x="1268.5" y="773.5" width="6.0" height="6.0" fill="none" stroke="#555" stroke-width="1"/><rect x="1265" y="819" width="7.0" height="7.0" fill="#4a4a4a" /><rect x="1265.5" y="819.5" width="6.0" height="6.0" fill="none" stroke="#555" stroke-width="1"/><rect x="1265" y="830" width="7.0" height="7.0" fill="#4a4a4a" /><rect x="1265.5" y="830.5" width="6.0" height="6.0" fill="none" stroke="#555" stroke-width="1"/><rect x="595" y="794" width="10.0" height="6.0" fill="#474747" /><rect x="659" y="794" width="10.0" height="6.0" fill="#474747" /><rect x="725" y="794" width="10.0" height="6.0" fill="#474747" /><rect x="788" y="794" width="10.0" height="6.0" fill="#474747" /><rect x="1000" y="794" width="10.0" height="6.0" fill="#474747" /><rect x="1092" y="794" width="10.0" height="6.0" fill="#474747" /><rect x="1143" y="794" width="10.0" height="6.0" fill="#474747" /><rect x="1211" y="794" width="10.0" height="6.0" fill="#474747" /><rect x="1289" y="794" width="10.0" height="6.0" fill="#474747" /><rect x="1344" y="794" width="10.0" height="6.0" fill="#474747" /><rect x="1372" y="794" width="10.0" height="6.0" fill="#474747" /><path d="M1420.5,726L1420.5,868" stroke="#6a6a6a" stroke-width="1" fill="none"/><path d="M1431.5,726L1431.5,868" stroke="#6a6a6a" stroke-width="1" fill="none"/><rect x="1326" y="770" width="174.0" height="57.0" fill="none" stroke="#555" stroke-width="1"/><rect x="1374" y="770" width="24.0" height="57.0" fill="none" stroke="#505050" stroke-width="1"/><rect x="1478" y="759" width="22.0" height="8.0" fill="#2e2e2e" /><rect x="1250" y="717" width="433.0" height="9.0" fill="#000" /><path d="M1486,788L1526,760H1684V775H1531L1500,797L1531,819H1684V834H1526L1486,806Z" fill="#545454"/><path d="M1498,797L1531,775H1680V819H1531Z" fill="#3e3e3e"/><rect x="1485" y="723" width="201.0" height="9.0" fill="#333333" /><rect x="452.5" y="735.5" width="107.5" height="20.0" fill="none" stroke="#5c5c5c" stroke-width="1"/><rect x="403.5" y="769.5" width="60.0" height="57.0" fill="none" stroke="#5c5c5c" stroke-width="1"/><rect x="443.5" y="771.5" width="19.0" height="34.0" fill="none" stroke="#5c5c5c" stroke-width="1"/><rect x="450.5" y="774.5" width="9.5" height="15.5" fill="none" stroke="#5c5c5c" stroke-width="1"/><rect x="461.5" y="778.5" width="79.0" height="36.0" fill="none" stroke="#5c5c5c" stroke-width="1"/><rect x="457.5" y="826.5" width="14.5" height="10.0" fill="none" stroke="#5c5c5c" stroke-width="1"/><rect x="434.5" y="802.5" width="10.5" height="55.0" fill="none" stroke="#5c5c5c" stroke-width="1"/><rect x="1326.5" y="768.5" width="71.0" height="56.0" fill="none" stroke="#5c5c5c" stroke-width="1"/><rect x="1338.5" y="795.5" width="59.0" height="29.0" fill="none" stroke="#5c5c5c" stroke-width="1"/><rect x="1285.5" y="779.5" width="43.0" height="35.0" fill="none" stroke="#5c5c5c" stroke-width="1"/><rect x="1500.5" y="762.5" width="3.0" height="62.5" fill="none" stroke="#5c5c5c" stroke-width="1"/><rect x="1366.5" y="768.5" width="17.0" height="26.5" fill="none" stroke="#5c5c5c" stroke-width="1"/><rect x="1376.5" y="775.5" width="5.0" height="14.0" fill="none" stroke="#5c5c5c" stroke-width="1"/><rect x="1390.5" y="775.5" width="3.0" height="14.0" fill="none" stroke="#5c5c5c" stroke-width="1"/><path d="M1323,763.5L1474,763.5" stroke="#5a5a5a" stroke-width="1" fill="none"/><path d="M1323,828.5L1474,828.5" stroke="#5a5a5a" stroke-width="1" fill="none"/><rect x="870" y="774" width="10.0" height="41.0" fill="#4c4c4c" /><rect x="888" y="770" width="30.0" height="30.0" fill="#4e4e4e" /><rect x="888.5" y="770.5" width="29.0" height="29.0" fill="none" stroke="#5e5e5e" stroke-width="1"/><rect x="890" y="800" width="90.0" height="13.0" fill="#474747" /><rect x="344" y="708" width="107.5" height="177.5" fill="#3c3c3c" /><rect x="350" y="714" width="96.0" height="166.0" fill="#444444" /><rect x="350.5" y="714.5" width="95.0" height="165.0" fill="none" stroke="#555" stroke-width="1"/><rect x="357" y="721.5" width="84.0" height="57.5" fill="#5a5a5a" /><rect x="410" y="724" width="30.0" height="36.0" fill="#6a6a6a" /><rect x="358" y="756" width="28.0" height="22.0" fill="#636363" /><rect x="387" y="763" width="54.0" height="16.0" fill="#5e5e5e" /><rect x="357" y="779" width="84.0" height="14.0" fill="#464646" /><rect x="357" y="801" width="84.0" height="71.5" fill="#5e5e5e" /><rect x="395" y="805" width="25.0" height="23.0" fill="#6a6a6a" /><rect x="358" y="834" width="28.0" height="36.0" fill="#6a6a6a" /><rect x="386" y="828" width="55.0" height="44.0" fill="#666666" /><rect x="441" y="721.5" width="10.5" height="151.0" fill="#404040" /><rect x="1683" y="708" width="107.5" height="177.5" fill="#3c3c3c" /><rect x="1689" y="714" width="95.0" height="166.0" fill="#444444" /><rect x="1689.5" y="714.5" width="94.0" height="165.0" fill="none" stroke="#555" stroke-width="1"/><rect x="1695.5" y="721.5" width="82.0" height="71.5" fill="#5a5a5a" /><rect x="1738" y="724" width="30.0" height="35.0" fill="#6a6a6a" /><rect x="1726" y="759" width="51.0" height="34.0" fill="#5e5e5e" /><rect x="1695.5" y="801" width="82.0" height="71.0" fill="#5a5a5a" /><rect x="1695" y="834" width="30.0" height="36.0" fill="#646464" /><rect x="1725" y="834" width="52.0" height="38.0" fill="#666666" /><rect x="1748" y="806" width="29.0" height="12.0" fill="#4a4a4a" /><rect x="1687" y="721.5" width="8.0" height="150.5" fill="#3e3e3e" /><rect x="1777.5" y="721.5" width="12.5" height="150.5" fill="#424242" /><path d="M344,709V885H451.5V872.5H357.5V721.5H451.5V709Z" stroke="#fbbd00" stroke-width="1.5" fill="none"/><path d="M344,793.5H1491L1529,767.5H1688V826.5H1529L1491,800.5H344" stroke="#fbbd00" stroke-width="1.5" fill="none"/><path d="M1498.5,797L1531,775.5H1680.5V818.5H1531Z" stroke="#fbbd00" stroke-width="1.5" fill="none"/><path d="M1485.5,723.5H1686V731.5H1485.5Z" stroke="#fbbd00" stroke-width="1.5" fill="none"/><rect x="858.5" y="726.5" width="11.0" height="141.0" fill="none" stroke="#fbbd00" stroke-width="1.5"/><rect x="936.5" y="726.5" width="11.0" height="141.0" fill="none" stroke="#fbbd00" stroke-width="1.5"/><path d="M1683.5,708.5H1790.5V885.3H1683.5V872.3H1790M1683.5,708.5V721.5H1778" stroke="#fbbd00" stroke-width="1.5" fill="none"/><path d="M1687,721.5V872M1695.5,721.5V872M1777.5,721.5V872" stroke="#fbbd00" stroke-width="1.5" fill="none"/><path d="M1688,793.5H1790M1688,800.5H1790" stroke="#fbbd00" stroke-width="1.5" fill="none"/><path d="M357.5,793.5V800.5" stroke="#fbbd00" stroke-width="1.5" fill="none"/><path d="M449.5,793.5V800.5" stroke="#fbbd00" stroke-width="1.5" fill="none"/><path d="M458.5,793.5V800.5" stroke="#fbbd00" stroke-width="1.5" fill="none"/><path d="M521.5,793.5V800.5" stroke="#fbbd00" stroke-width="1.5" fill="none"/><path d="M550.5,793.5V800.5" stroke="#fbbd00" stroke-width="1.5" fill="none"/><path d="M849.5,793.5V800.5" stroke="#fbbd00" stroke-width="1.5" fill="none"/><path d="M870.5,793.5V800.5" stroke="#fbbd00" stroke-width="1.5" fill="none"/><path d="M878.5,793.5V800.5" stroke="#fbbd00" stroke-width="1.5" fill="none"/><path d="M917,793.5V800.5" stroke="#fbbd00" stroke-width="1.5" fill="none"/><path d="M920,793.5V800.5" stroke="#fbbd00" stroke-width="1.5" fill="none"/><path d="M1248.5,793.5V800.5" stroke="#fbbd00" stroke-width="1.5" fill="none"/><path d="M1277.5,793.5V800.5" stroke="#fbbd00" stroke-width="1.5" fill="none"/><path d="M1309.5,793.5V800.5" stroke="#fbbd00" stroke-width="1.5" fill="none"/><path d="M1338.5,793.5V800.5" stroke="#fbbd00" stroke-width="1.5" fill="none"/><path d="M1420.5,793.5V800.5" stroke="#fbbd00" stroke-width="1.5" fill="none"/><path d="M1436.5,793.5V800.5" stroke="#fbbd00" stroke-width="1.5" fill="none"/><path d="M1726.5,793.5V800.5" stroke="#fbbd00" stroke-width="1.5" fill="none"/><path d="M1741.5,793.5V800.5" stroke="#fbbd00" stroke-width="1.5" fill="none"/></svg>
<div class="a" style="left:243px;top:582px;width:88px;height:32px;background:#333"></div>
<div class="btn" style="left:246px;top:583px;background:linear-gradient(#fde08a,#f6b91c 55%,#f9cf5a);color:#111">2D</div>
<div class="btn" style="left:273px;top:583px">3D</div>
<div class="btn" style="left:301px;top:583px">C</div>
<div class="a" style="left:243px;top:1018px;width:1649px;height:2px;background:#0a7ad8"></div>
<div class="a" style="left:236px;top:575px;width:1663px;height:452px;border:7px solid #fc3a3a"></div>
<svg class="a" style="left:226px;top:540px" width="14" height="60"><path d="M10,2V13L4,7.5Z" fill="#0a6fd6"/><path d="M6,26L2,30L6,34ZM7,26L11,30L7,34Z" fill="#b8b8b8"/><path d="M3,46V57L9,51.5Z" fill="#0a6fd6"/></svg>
<svg class="a" style="left:1030px;top:564px" width="70" height="11"><path d="M7,9H18L12.5,3Z" fill="#0a6fd6"/><path d="M31,5.5H39L35,1ZM31,6.5H39L35,10Z" fill="#b8b8b8"/><path d="M51,2H62L56.5,8Z" fill="#0a6fd6"/></svg>

</body></html>
